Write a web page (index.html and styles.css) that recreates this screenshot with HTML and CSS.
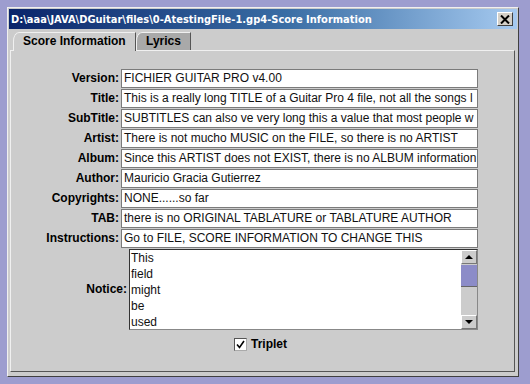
FILE: index.html
```html
<!DOCTYPE html>
<html lang="en">
<head>
    <meta charset="UTF-8">
    <title>Score Information</title>
    <link rel="stylesheet" href="styles.css">
</head>
<body>
    <div class="window">
        <div class="titlebar">
            <span class="title-text">D:\aaa\JAVA\DGuitar\files\0-AtestingFile-1.gp4-Score Information</span>
            <span class="close-btn">
                <svg width="10" height="9" viewBox="0 0 10 9"><path d="M1 0.5 L9 8.5 M9 0.5 L1 8.5" stroke="#000" stroke-width="2"/></svg>
            </span>
        </div>
        <div class="content">
            <div class="tabs">
                <div class="tab selected">Score Information</div>
                <div class="tab">Lyrics</div>
            </div>
            <div class="panel">
                <div class="row"><label class="label">Version:</label><div class="field">FICHIER GUITAR PRO v4.00</div></div>
                <div class="row"><label class="label">Title:</label><div class="field">This is a really long TITLE of a Guitar Pro 4 file, not all the songs l</div></div>
                <div class="row"><label class="label">SubTitle:</label><div class="field">SUBTITLES can also ve very long this a value that most people w</div></div>
                <div class="row"><label class="label">Artist:</label><div class="field">There is not mucho MUSIC on the FILE, so there is no ARTIST</div></div>
                <div class="row"><label class="label">Album:</label><div class="field">Since this ARTIST does not EXIST, there is no ALBUM information</div></div>
                <div class="row"><label class="label">Author:</label><div class="field">Mauricio Gracia Gutierrez</div></div>
                <div class="row"><label class="label">Copyrights:</label><div class="field">NONE......so far</div></div>
                <div class="row"><label class="label">TAB:</label><div class="field">there is no ORIGINAL TABLATURE or TABLATURE AUTHOR</div></div>
                <div class="row"><label class="label">Instructions:</label><div class="field">Go to FILE, SCORE INFORMATION TO CHANGE THIS</div></div>
                <div class="row notice-row">
                    <label class="label notice-label">Notice:</label>
                    <div class="scroll-pane">
                        <div class="textarea">This<br>field<br>might<br>be<br>used</div>
                        <div class="scrollbar">
                            <div class="sb-btn"><span class="arrow-up"></span></div>
                            <div class="sb-track">
                                <div class="sb-thumb"></div>
                            </div>
                            <div class="sb-btn"><span class="arrow-down"></span></div>
                        </div>
                    </div>
                </div>
                <div class="check-row">
                    <span class="checkbox">
                        <svg width="9" height="9" viewBox="0 0 9 9"><path d="M1 4.5 L3.5 7.5 L8 1" stroke="#000" stroke-width="1.6" fill="none"/></svg>
                    </span>
                    <span class="check-label">Triplet</span>
                </div>
            </div>
        </div>
    </div>
</body>
</html>
```

FILE: styles.css
```css
body {
    margin: 0;
    background-color: #9d9dcf;
    font-family: "Liberation Sans", Arial, sans-serif;
    font-size: 12px;
}

.window {
    margin: 7px 0 0 7px;
    width: 512px;
    height: 370px;
    box-sizing: border-box;
    background-color: #cccccc;
    border: 1px solid;
    border-color: #f0f0f0 #404040 #404040 #f0f0f0;
    padding: 1px;
    display: flex;
    flex-direction: column;
}

.titlebar {
    height: 20px;
    background: linear-gradient(to right, #0a246a, #3a6ea5 55%, #a6caf0);
    color: #fff;
    display: flex;
    align-items: center;
    justify-content: space-between;
    padding: 0 4px 0 2px;
}

.title-text {
    font-family: "DejaVu Sans Condensed", "DejaVu Sans", sans-serif;
    font-weight: bold;
    font-size: 11px;
}

.close-btn {
    width: 16px;
    height: 14px;
    box-sizing: border-box;
    background-color: #d4d0c8;
    border: 1px solid;
    border-color: #fff #404040 #404040 #fff;
    display: flex;
    align-items: center;
    justify-content: center;
}

.content {
    flex: 1;
    display: flex;
    flex-direction: column;
    padding: 3px 2px 3px 1px;
}

.tabs {
    display: flex;
    align-items: flex-start;
    padding-left: 3px;
    height: 19px;
    position: relative;
    z-index: 1;
    margin-bottom: -1px;
}

.tab {
    height: 18px;
    box-sizing: border-box;
    font-weight: bold;
    white-space: nowrap;
    padding: 0 9px 0 9px;
    line-height: 17px;
    background-color: #a9a9a9;
    border: 1px solid;
    border-bottom: none;
    border-color: #f0f0f0 #555 #555 #f0f0f0;
    border-top-left-radius: 6px 9px;
    color: #000;
}

.tab.selected {
    width: 123px;
    padding: 0 0 0 9px;
    background-color: #cccccc;
    height: 19px;
}

.panel {
    flex: 1;
    border: 1px solid;
    border-color: #f0f0f0 #555 #555 #f0f0f0;
    padding-top: 18px;
}

.row {
    display: flex;
    gap: 2px;
    height: 19px;
    margin-bottom: 1px;
}

.label {
    width: 108px;
    flex-shrink: 0;
    text-align: right;
    font-weight: bold;
    line-height: 19px;
    color: #000;
}

.field {
    width: 357px;
    box-sizing: border-box;
    background-color: #fff;
    border: 1px solid #7b7b7b;
    padding-left: 2px;
    line-height: 17px;
    white-space: nowrap;
    overflow: hidden;
    color: #111;
}

.notice-row {
    height: 81px;
    align-items: center;
}

.notice-label {
    width: 116px;
}

.scroll-pane {
    width: 349px;
    height: 81px;
    box-sizing: border-box;
    display: flex;
    border: 1px solid;
    border-color: #333 #888 #888 #333;
    background-color: #fff;
}

.textarea {
    flex: 1;
    padding-left: 1px;
    line-height: 16px;
    color: #111;
}

.scrollbar {
    width: 16px;
    display: flex;
    flex-direction: column;
    background-color: #cccccc;
}

.sb-btn {
    height: 14px;
    box-sizing: border-box;
    border: 1px solid;
    border-color: #fff #777 #777 #fff;
    display: flex;
    align-items: center;
    justify-content: center;
}

.arrow-up {
    border-left: 4px solid transparent;
    border-right: 4px solid transparent;
    border-bottom: 4px solid #000;
}

.arrow-down {
    border-left: 4px solid transparent;
    border-right: 4px solid transparent;
    border-top: 4px solid #000;
}

.sb-track {
    flex: 1;
}

.sb-thumb {
    height: 21px;
    margin-top: 1px;
    background-color: #8c8cc8;
    background-image: radial-gradient(#c8c8f0 0.5px, transparent 0.6px);
    background-size: 2px 2px;
    border-bottom: 1px solid #666;
}

.check-row {
    display: flex;
    align-items: center;
    justify-content: center;
    gap: 4px;
    margin-top: 7px;
    padding-right: 4px;
}

.checkbox {
    width: 13px;
    height: 13px;
    box-sizing: border-box;
    background-color: #fff;
    border: 1px solid;
    border-color: #555 #aaa #aaa #555;
    display: flex;
    align-items: center;
    justify-content: center;
}

.check-label {
    font-weight: bold;
}
```
